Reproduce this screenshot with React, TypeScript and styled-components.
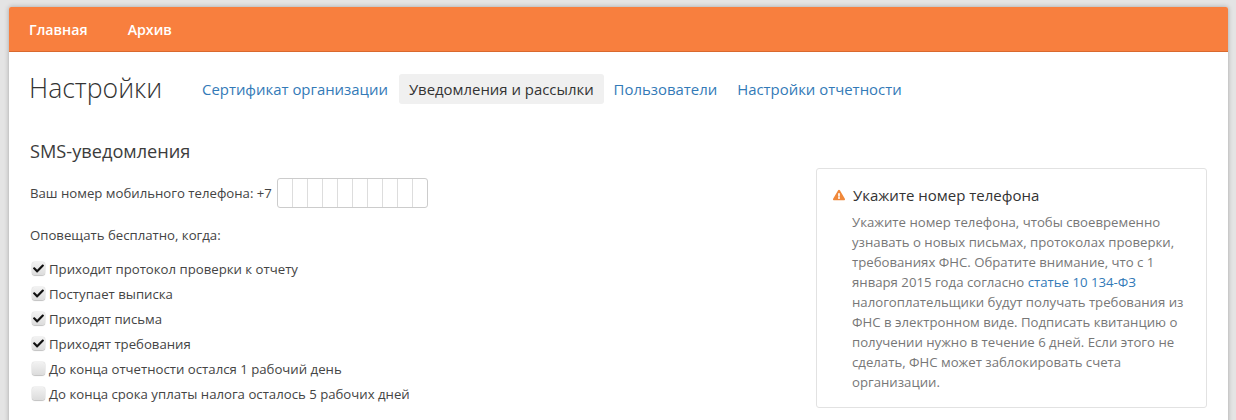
import React from 'react';
import styled, { createGlobalStyle } from 'styled-components';
import { FaCheck, FaExclamationTriangle } from 'react-icons/fa';

const GlobalStyle = createGlobalStyle`
  html, body {
    margin: 0;
    height: 420px;
    overflow: hidden;
    background: #e4e4e4;
    font-family: "Open Sans", "Liberation Sans", sans-serif;
    font-size: 13.2px;
    color: #444;
  }
`;

const Page = styled.div`
  height: 420px;
  overflow: hidden;
  padding: 7px 8px 0 9px;
  box-sizing: border-box;
`;

const Card = styled.div`
  background: #fff;
  height: 500px;
  border-radius: 2px 2px 0 0;
  box-shadow: 0 0 5px rgba(0, 0, 0, 0.28);
`;

const TopBar = styled.nav`
  height: 45px;
  display: flex;
  align-items: center;
  gap: 40px;
  padding: 0 20px;
  background: #f87f3e;
  border-radius: 2px 2px 0 0;
  box-shadow: inset 0 -1px 0 #d9692e;
`;

const TopLink = styled.a`
  color: #fff;
  font-size: 14.2px;
  font-weight: 600;
`;

const Content = styled.div`
  padding: 0 21px 0 21px;
`;

const TitleRow = styled.div`
  display: flex;
  align-items: center;
  height: 74px;
`;

const Title = styled.h1`
  margin: 0 29px 3px -1px;
  width: 134px;
  font-size: 26.6px;
  font-weight: 300;
  color: #333;
`;

const Tab = styled.a<{ $active?: boolean }>`
  padding: 5px 10px;
  margin-left: ${(p) => (p.$active ? '1px' : '0')};
  font-size: 14.92px;
  line-height: 20px;
  border-radius: 3px;
  color: ${(p) => (p.$active ? '#333' : '#337ab7')};
  background: ${(p) => (p.$active ? '#f0f0f0' : 'transparent')};
`;

const Columns = styled.div`
  display: flex;
  justify-content: space-between;
  margin-top: 13px;
`;

const Left = styled.div`
  width: 700px;
`;

const SectionTitle = styled.h2`
  margin: 0 0 15px;
  font-size: 18.2px;
  line-height: 24px;
  font-weight: 400;
  color: #3c3c3c;
`;

const PhoneRow = styled.div`
  display: flex;
  align-items: center;
  gap: 5px;
  height: 30px;
`;

const PhoneCells = styled.div`
  display: flex;
  height: 30px;
  border: 1px solid #ccc;
  border-radius: 3px;
  box-sizing: border-box;
`;

const PhoneCell = styled.span`
  width: 15px;
  border-left: 1px solid #ddd;
  box-sizing: border-box;

  &:first-child {
    border-left: 0;
    width: 14px;
  }
`;

const Hint = styled.p`
  margin: 17px 0 11px;
  line-height: 20px;
`;

const CheckList = styled.div`
  display: flex;
  flex-direction: column;
`;

const CheckRow = styled.label`
  display: flex;
  align-items: center;
  gap: 4px;
  height: 25px;
  padding-left: 2px;
`;

const Box = styled.span`
  width: 13px;
  height: 13px;
  display: flex;
  align-items: center;
  justify-content: center;
  border-radius: 3px;
  background: linear-gradient(#f2f2f2, #dcdcdc);
  box-shadow: 0 0 1px rgba(0, 0, 0, 0.5), 0 1px 1px rgba(0, 0, 0, 0.2);
  color: #111;
  font-size: 11px;
`;

const Notice = styled.aside`
  width: 391px;
  height: 240px;
  margin-top: 29px;
  padding: 15px 15px 0 16px;
  box-sizing: border-box;
  border: 1px solid #e2e2e2;
  border-radius: 3px;
`;

const NoticeTitle = styled.div`
  display: flex;
  align-items: center;
  gap: 8px;
  font-size: 15px;
  line-height: 22px;
  color: #333;
  margin-bottom: 6px;
`;

const WarnIcon = styled.span`
  display: flex;
  color: #f0883a;
  font-size: 12px;
`;

const NoticeText = styled.p`
  margin: 0 0 0 19px;
  font-size: 13.2px;
  line-height: 20px;
  color: #777;
`;

const Link = styled.a`
  color: #337ab7;
`;

const checks = [
  { label: 'Приходит протокол проверки к отчету', on: true },
  { label: 'Поступает выписка', on: true },
  { label: 'Приходят письма', on: true },
  { label: 'Приходят требования', on: true },
  { label: 'До конца отчетности остался 1 рабочий день', on: false },
  { label: 'До конца срока уплаты налога осталось 5 рабочих дней', on: false },
];

const App: React.FC = () => {
  return (
    <Page>
      <GlobalStyle />
      <Card>
        <TopBar>
          <TopLink>Главная</TopLink>
          <TopLink>Архив</TopLink>
        </TopBar>
        <Content>
          <TitleRow>
            <Title>Настройки</Title>
            <Tab>Сертификат организации</Tab>
            <Tab $active>Уведомления и рассылки</Tab>
            <Tab>Пользователи</Tab>
            <Tab>Настройки отчетности</Tab>
          </TitleRow>
          <Columns>
            <Left>
              <SectionTitle>SMS-уведомления</SectionTitle>
              <PhoneRow>
                Ваш номер мобильного телефона: +7
                <PhoneCells>
                  {Array.from({ length: 10 }, (_, i) => (
                    <PhoneCell key={i} />
                  ))}
                </PhoneCells>
              </PhoneRow>
              <Hint>Оповещать бесплатно, когда:</Hint>
              <CheckList>
                {checks.map((item) => (
                  <CheckRow key={item.label}>
                    <Box>{item.on && <FaCheck />}</Box>
                    {item.label}
                  </CheckRow>
                ))}
              </CheckList>
            </Left>
            <Notice>
              <NoticeTitle>
                <WarnIcon>
                  <FaExclamationTriangle />
                </WarnIcon>
                Укажите номер телефона
              </NoticeTitle>
              <NoticeText>
                Укажите номер телефона, чтобы своевременно узнавать о новых письмах, протоколах
                проверки, требованиях ФНС. Обратите внимание, что с 1 января 2015 года согласно{' '}
                <Link>статье 10 134-ФЗ</Link> налогоплательщики будут получать требования из ФНС в
                электронном виде. Подписать квитанцию о получении нужно в течение 6 дней. Если этого
                не сделать, ФНС может заблокировать счета организации.
              </NoticeText>
            </Notice>
          </Columns>
        </Content>
      </Card>
    </Page>
  );
};

export default App;
